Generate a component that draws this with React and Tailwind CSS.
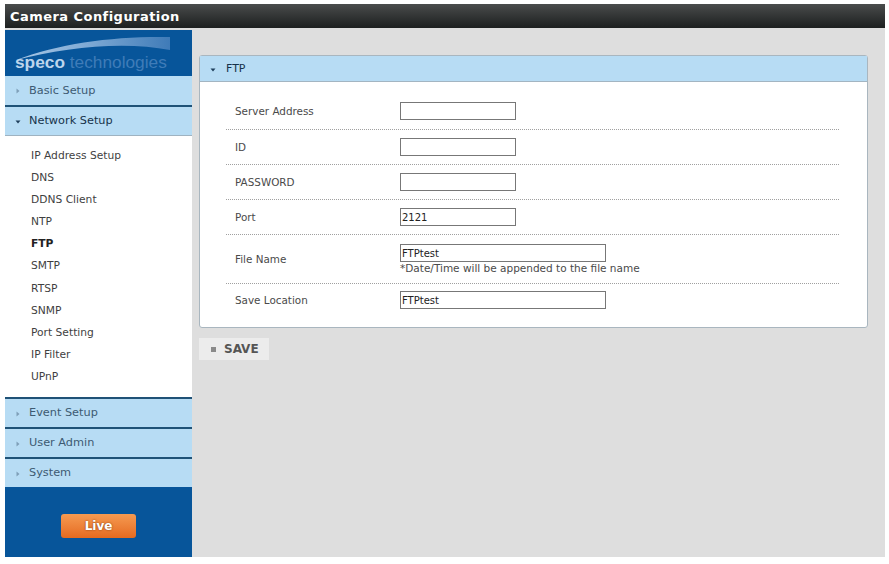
const FONT = "font-['DejaVu_Sans',sans-serif]";

function Arrow({ open, dark }) {
  return (
    <svg width="6" height="6" viewBox="0 0 6 6" className="shrink-0">
      {open ? (
        <path d="M0.5 1.5 H5.5 L3 4.5 Z" fill={dark ? "#1f3f5c" : "#4a6f8c"} />
      ) : (
        <path d="M1.5 0.5 V5.5 L4.5 3 Z" fill="#7f9fb8" />
      )}
    </svg>
  );
}

function MenuHead({ label, open, first }) {
  return (
    <div
      className={`flex items-center gap-[8px] pl-[10px] pt-[1px] bg-[#b7dcf4] text-[11.3px] ${
        first ? "h-[29px]" : "h-[30px] border-t-2 border-[#1f5277]"
      } ${open ? "text-[#16324a]" : "text-[#3d5a72]"}`}
    >
      <Arrow open={open} dark />
      <span>{label}</span>
    </div>
  );
}

const items = ["IP Address Setup", "DNS", "DDNS Client", "NTP", "FTP", "SMTP", "RTSP", "SNMP", "Port Setting", "IP Filter", "UPnP"];

function Row({ label, children, h, last }) {
  return (
    <div
      className={`flex items-center pl-[9px] ${last ? "" : "border-b border-dotted border-[#a0a0a0]"}`}
      style={{ height: h }}
    >
      <div className="w-[165px] pt-[2px] text-[10.4px] text-[#4a4a4a]">{label}</div>
      <div>{children}</div>
    </div>
  );
}

function Field({ value, wide }) {
  return (
    <div
      className={`h-[18px] border border-[#777777] bg-white px-[1px] pt-[1px] text-[10px] leading-[16px] text-[#222222] ${
        wide ? "w-[206px]" : "w-[116px]"
      }`}
    >
      {value}
    </div>
  );
}

export default function App() {
  return (
    <div className={`w-[889px] h-[564px] bg-white pt-[4px] pl-[5px] pr-[4px] pb-[7px] flex flex-col ${FONT}`}>
      <div className="h-[24px] shrink-0 bg-gradient-to-b from-[#4a4c4c] to-[#1d2020] flex items-center pl-[5px] pt-[1px] text-white font-bold text-[13px] tracking-[0.45px]">
        Camera Configuration
      </div>
      <div className="flex-1 flex min-h-0 bg-[#dedede] pt-[2px]">
        <aside className="w-[187px] shrink-0 flex flex-col bg-white">
          <div className="h-[46px] bg-[#07559a] flex flex-col justify-end pl-[10px] pb-[5px] relative overflow-hidden">
            <svg width="160" height="30" viewBox="0 0 160 30" className="absolute left-[10px] top-[4px]">
              <defs>
                <linearGradient id="swoosh" x1="0" x2="1" y1="0" y2="0">
                  <stop offset="0" stopColor="#a9c8e6" />
                  <stop offset="0.5" stopColor="#7ba7d3" />
                  <stop offset="1" stopColor="#3f7bb8" />
                </linearGradient>
              </defs>
              <path d="M1 26 C45 9 100 2 155 3 L155 16 C110 7 50 13 1 26 Z" fill="url(#swoosh)" />
            </svg>
            <div className="relative text-[17.3px] leading-[18px] whitespace-nowrap font-['Liberation_Sans',sans-serif]">
              <span className="font-bold text-[#bdd5ec]">speco</span>
              <span className="text-[#3f7cb8]"> technologies</span>
            </div>
          </div>
          <MenuHead label="Basic Setup" first />
          <MenuHead label="Network Setup" open />
          <div className="flex-1 flex flex-col border-t border-[#9fb3c1] pt-[9px] pl-[26px] text-[10.7px] text-[#3f3f3f]">
            {items.map((t) => (
              <div key={t} className={`h-[22.1px] flex items-center ${t === "FTP" ? "font-bold text-[#222222]" : ""}`}>
                {t}
              </div>
            ))}
          </div>
          <MenuHead label="Event Setup" />
          <MenuHead label="User Admin" />
          <MenuHead label="System" />
          <div className="h-[70px] bg-[#07559a] flex items-start justify-center pt-[27px]">
            <button className="w-[75px] h-[24px] rounded-[3px] bg-gradient-to-b from-[#f59a50] to-[#e56a1e] text-white text-[12px] font-bold [text-shadow:0_0_2px_#7a3a10]">
              Live
            </button>
          </div>
        </aside>
        <main className="flex-1 pl-[7px] pr-[17px] pt-[25px] min-w-0">
          <section className="rounded-[3px] border border-[#a9b6bf] bg-white">
            <div className="h-[26px] flex items-center gap-[10px] pl-[10px] pt-[2px] bg-[#b7dcf4] border-b border-[#a3b5c2] text-[11px] text-[#16324a]">
              <Arrow open dark />
              <span>FTP</span>
            </div>
            <div className="pl-[26px] pr-[28px] pt-[10px] pb-[12px]">
              <Row label="Server Address" h={38}><Field /></Row>
              <Row label="ID" h={35}><Field /></Row>
              <Row label="PASSWORD" h={35}><Field /></Row>
              <Row label="Port" h={35}><Field value="2121" /></Row>
              <Row label="File Name" h={49}>
                <Field value="FTPtest" wide />
                <div className="text-[10.5px] leading-[12px] text-[#4a4a4a] whitespace-nowrap">*Date/Time will be appended to the file name</div>
              </Row>
              <Row label="Save Location" h={31} last><Field value="FTPtest" wide /></Row>
            </div>
          </section>
          <button className="mt-[10px] w-[70px] h-[22px] bg-[#ececec] flex items-center gap-[8px] pl-[12px] text-[12px] font-bold text-[#555555]">
            <span className="w-[5px] h-[5px] bg-[#8a8a8a]" />
            SAVE
          </button>
        </main>
      </div>
    </div>
  );
}
